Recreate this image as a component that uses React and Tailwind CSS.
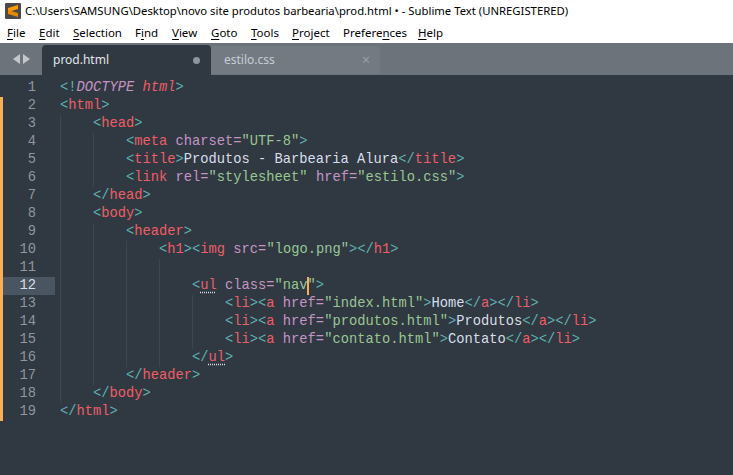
import React from "react";

const P = "text-[#5fb3b3]";
const T = "text-[#ec5f67]";
const A = "text-[#c594c5]";
const S = "text-[#99c794]";
const X = "text-[#d8dee9]";

const open = (name, attrs = []) => [
  ["<", P],
  [name, T],
  ...attrs.flatMap(([k, v]) => [[" ", X], [k, A], ["=", A], [`"${v}"`, S]]),
  [">", P],
];
const close = (name) => [
  ["</", P],
  [name, T],
  [">", P],
];

const UL = T + " underline decoration-dotted decoration-[#d8dee9] underline-offset-[3px]";

const lines = [
  { indent: 0, tokens: [["<!", P], ["DOCTYPE", A + " italic"], [" ", X], ["html", T + " italic"], [">", P]] },
  { indent: 0, tokens: open("html") },
  { indent: 1, tokens: open("head") },
  { indent: 2, tokens: open("meta", [["charset", "UTF-8"]]) },
  { indent: 2, tokens: [...open("title"), ["Produtos - Barbearia Alura", X], ...close("title")] },
  { indent: 2, tokens: open("link", [["rel", "stylesheet"], ["href", "estilo.css"]]) },
  { indent: 1, tokens: close("head") },
  { indent: 1, tokens: open("body") },
  { indent: 2, tokens: open("header") },
  { indent: 3, tokens: [...open("h1"), ...open("img", [["src", "logo.png"]]), ...close("h1")] },
  { indent: 4, tokens: [] },
  {
    indent: 4,
    current: true,
    tokens: [
      ["<", P],
      ["ul", UL],
      [" ", X],
      ["class", A],
      ["=", A],
      ['"nav', S],
      ["cursor", ""],
      ['"', S],
      [">", P],
    ],
  },
  { indent: 5, tokens: [...open("li"), ...open("a", [["href", "index.html"]]), ["Home", X], ...close("a"), ...close("li")] },
  { indent: 5, tokens: [...open("li"), ...open("a", [["href", "produtos.html"]]), ["Produtos", X], ...close("a"), ...close("li")] },
  { indent: 5, tokens: [...open("li"), ...open("a", [["href", "contato.html"]]), ["Contato", X], ...close("a"), ...close("li")] },
  { indent: 4, tokens: [["</", P], ["ul", UL], [">", P]] },
  { indent: 2, tokens: close("header") },
  { indent: 1, tokens: close("body") },
  { indent: 0, tokens: close("html") },
];

const menu = [
  ["F", "ile", "", 32],
  ["E", "dit", "", 34],
  ["S", "election", "", 62],
  ["F", "i", "nd", 37, true],
  ["V", "iew", "", 39],
  ["G", "oto", "", 40],
  ["T", "ools", "", 41],
  ["P", "roject", "", 51],
  ["Prefere", "n", "ces", 75, true],
  ["H", "elp", "", 40],
];

const SublimeIcon = () => (
  <svg width="16" height="16" viewBox="0 0 16 16">
    <rect x="0" y="0" width="16" height="16" rx="1" fill="#4a4a4a" />
    <polygon points="3,5 13,2 13,6 3,9" fill="#ff9800" />
    <polygon points="3,7 13,10 13,14 3,11" fill="#e68a00" />
  </svg>
);

const App = () => {
  return (
    <div className="w-[733px] h-[475px] overflow-hidden flex flex-col bg-[#303841] font-['Segoe_UI','Noto_Sans',sans-serif]">
      <div className="h-[22px] bg-white flex items-center pl-[5px] gap-[4px] text-[11.3px] text-black">
        <SublimeIcon />
        <span className="whitespace-pre">
          C:\Users\SAMSUNG\Desktop\novo site produtos barbearia\prod.html • - Sublime Text (UNREGISTERED)
        </span>
      </div>
      <div className="h-[21px] bg-white flex items-center pl-[7px] text-[11.5px] text-black">
        {menu.map(([a, b, c, w, mid]) => (
          <span key={a + b} className="whitespace-pre" style={{ width: w }}>
            {mid ? (
              <>
                {a}
                <span className="underline underline-offset-[2px]">{b}</span>
                {c}
              </>
            ) : (
              <>
                <span className="underline underline-offset-[2px]">{a}</span>
                {b}
              </>
            )}
          </span>
        ))}
      </div>
      <div className="h-[32px] bg-[#6c737b] flex items-end">
        <div className="w-[42px] h-full flex items-center justify-center gap-[3px] pb-[1px]">
          <svg width="7" height="10" viewBox="0 0 7 10">
            <polygon points="7,0 0,5 7,10" fill="#c3c7cc" />
          </svg>
          <svg width="7" height="10" viewBox="0 0 7 10">
            <polygon points="0,0 7,5 0,10" fill="#c3c7cc" />
          </svg>
        </div>
        <div className="w-[169px] h-[30px] bg-[#303841] rounded-t-[4px] flex items-center justify-between pl-[11px] pr-[11px] text-[12px] text-[#e2e6eb]">
          <span>prod.html</span>
          <span className="w-[7px] h-[7px] rounded-full bg-[#8e959d]" />
        </div>
        <div className="w-[169px] h-[28px] mb-[1px] bg-[#737a82] rounded-t-[4px] flex items-center justify-between pl-[13px] pr-[10px] text-[12px] text-[#c9cdd2]">
          <span>estilo.css</span>
          <span className="text-[14px] text-[#9aa0a7] leading-none">×</span>
        </div>
      </div>
      <div className="flex-1 pt-[4px] font-['Liberation_Mono',monospace] text-[13.75px]">
        {lines.map((line, i) => (
          <div key={i} className="h-[18px] leading-[18px] flex">
            <div
              className={`w-[55px] shrink-0 border-l-[3px] pr-[19px] text-right ${
                i === 0 ? "border-transparent" : "border-[#f9ae58]"
              } ${line.current ? "bg-[#4a5562] text-[#d8dee9]" : "text-[#8f969f]"}`}
            >
              {i + 1}
            </div>
            <div className="pl-[5px] flex">
              {Array.from({ length: line.indent }).map((_, k) => (
                <span key={k} className="block w-[4ch] h-full border-l border-[#3d4651]" />
              ))}
              <span className="whitespace-pre">
                {line.tokens.map(([txt, cls], k) =>
                  txt === "cursor" ? (
                    <span
                      key={k}
                      className="inline-block align-top w-[2px] -mx-[1px] h-[18px] bg-[#f9ae58]"
                    />
                  ) : (
                    <span key={k} className={cls}>
                      {txt}
                    </span>
                  )
                )}
              </span>
            </div>
          </div>
        ))}
      </div>
    </div>
  );
};

export default App;
